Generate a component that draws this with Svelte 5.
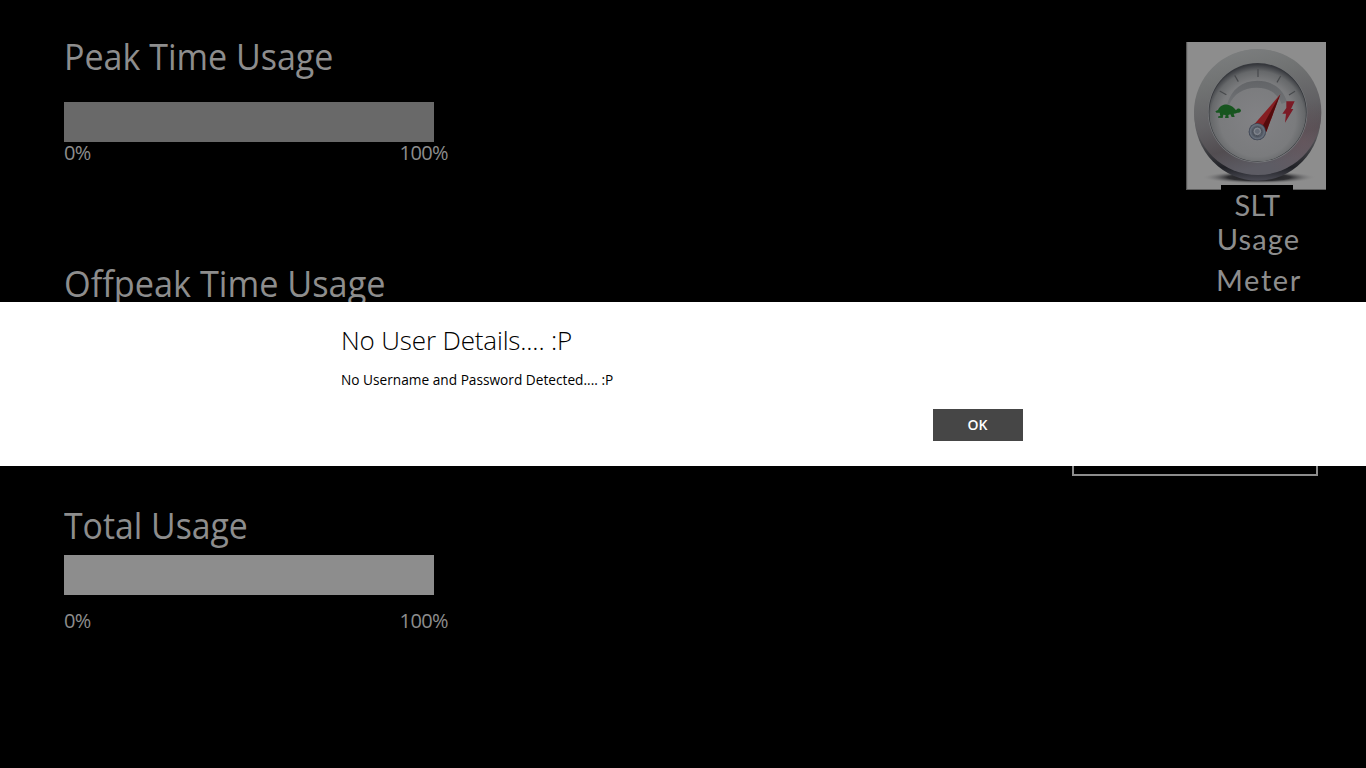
<script lang="ts">
   type Meter = {
      id: string;
      title: string;
      value: number;
      hasScale: boolean;
   };

   const meters: Meter[] = [
      { id: "peak", title: "Peak Time Usage", value: 0, hasScale: true },
      { id: "offpeak", title: "Offpeak Time Usage", value: 0, hasScale: false },
      { id: "total", title: "Total Usage", value: 0, hasScale: true },
   ];

   const ticks: string[] = ["M131 177L151 188", "M176 130L187 149", "M246 111V135", "M314 132L303 151", "M357 178L339 189"];

   let dialogOpen: boolean = true;

   const closeDialog = (): void => {
      dialogOpen = false;
   };
</script>

<div class="page">
   <main class="meters">
      {#each meters as meter (meter.id)}
         <section class="meter {meter.id}">
            <h1>{meter.title}</h1>
            <div class="bar">
               <div class="fill" style="width: {meter.value}%"></div>
            </div>
            {#if meter.hasScale}
               <div class="scale">
                  <span>0%</span>
                  <span>100%</span>
               </div>
            {/if}
         </section>
      {/each}
   </main>

   <aside>
      <div class="logo">
         <svg viewBox="30 30 420 444" width="140" height="148" preserveAspectRatio="none" aria-hidden="true">
            <defs>
               <linearGradient id="rim" x1="0" y1="0" x2="0.25" y2="1">
                  <stop offset="0" stop-color="#7f8182" />
                  <stop offset="0.3" stop-color="#717373" />
                  <stop offset="0.6" stop-color="#626164" />
                  <stop offset="0.82" stop-color="#524d51" />
                  <stop offset="1" stop-color="#5d5c64" />
               </linearGradient>
               <linearGradient id="edge" x1="0" y1="0" x2="0" y2="1">
                  <stop offset="0" stop-color="#777a7b" />
                  <stop offset="0.65" stop-color="#5a5a5d" />
                  <stop offset="0.9" stop-color="#202126" />
                  <stop offset="1" stop-color="#4b4b54" />
               </linearGradient>
               <radialGradient id="face" cx="0.5" cy="0.56" r="0.56">
                  <stop offset="0" stop-color="#828285" />
                  <stop offset="0.7" stop-color="#7a7b7d" />
                  <stop offset="0.87" stop-color="#66686a" />
                  <stop offset="1" stop-color="#34363b" />
               </radialGradient>
               <radialGradient id="shade">
                  <stop offset="0" stop-color="#17171a" />
                  <stop offset="0.55" stop-color="#303033" />
                  <stop offset="1" stop-color="#8c8c8c" stop-opacity="0" />
               </radialGradient>
               <radialGradient id="blush" cx="0.86" cy="0.74" r="0.32">
                  <stop offset="0" stop-color="#6a585f" stop-opacity="0.7" />
                  <stop offset="1" stop-color="#6a585f" stop-opacity="0" />
               </radialGradient>
               <linearGradient id="arc" x1="0" y1="0" x2="0" y2="1">
                  <stop offset="0" stop-color="#626467" />
                  <stop offset="1" stop-color="#707275" />
               </linearGradient>
               <radialGradient id="hub">
                  <stop offset="0" stop-color="#777b82" />
                  <stop offset="0.42" stop-color="#838890" />
                  <stop offset="0.55" stop-color="#4d535e" />
                  <stop offset="0.82" stop-color="#68707c" />
                  <stop offset="1" stop-color="#303746" />
               </radialGradient>
            </defs>
            <rect x="31" y="30" width="420" height="444" fill="#8d8d8d" />
            <path d="M32 30V473H451" fill="none" stroke="#555" stroke-width="3" />
            <ellipse cx="249" cy="436" rx="171" ry="19" fill="url(#shade)" />
            <ellipse cx="245" cy="249" rx="190" ry="197" fill="url(#edge)" />
            <ellipse cx="245" cy="240" rx="191" ry="189" fill="url(#rim)" />
            <ellipse cx="245" cy="240" rx="191" ry="189" fill="url(#blush)" />
            <ellipse cx="245" cy="242" rx="149" ry="150" fill="#77797c" />
            <ellipse cx="245" cy="241" rx="147" ry="148" fill="#36383c" />
            <ellipse cx="245" cy="242" rx="145" ry="146" fill="url(#face)" />
            <path d="M153 218C166 171 199 146 244 146C289 146 321 171 333 209L317 216C304 184 279 167 242 167C200 167 173 187 160 218Z" fill="url(#arc)" />
            {#each ticks as tick}
               <path d={tick} stroke="#47494c" stroke-width="3.5" />
            {/each}
            <path
               d="M118 238L126 234C132 221 142 217 155 218C166 219 175 227 180 235C184 227 191 228 195 234C195 240 191 243 185 242C180 244 176 245 173 245L176 255L167 255L163 247L157 249L158 258L147 258L149 249L142 248L140 258L126 257L127 253L133 252L131 242L121 242Z"
               fill="#17551f"
            />
            <path d="M331 208H356L345 231H352L327 272L330 245H319L331 228Z" fill="#7b1a25" />
            <path d="M313 187L233 279L271 299Z" fill="#861e22" />
            <path d="M313 187L255 290L271 299Z" fill="#540b0c" />
            <circle cx="244" cy="299" r="26" fill="url(#hub)" />
            <circle cx="244" cy="298" r="13" fill="#747980" stroke="#4a505b" stroke-width="3" />
            <circle cx="244" cy="298" r="9" fill="#656b76" stroke="#858991" stroke-width="3" />
            <rect x="135" y="459" width="216" height="16" fill="#000" />
         </svg>
         <div class="name">
            <span class="slt">SLT</span>
            <span class="usage">Usage</span>
            <span class="meter-word">Meter</span>
         </div>
      </div>
      <div class="account"></div>
   </aside>

   {#if dialogOpen}
      <div class="dialog" role="alertdialog" aria-labelledby="dialog-title">
         <div class="content">
            <h2 id="dialog-title">No User Details.... :P</h2>
            <p>No Username and Password Detected.... :P</p>
            <button type="button" on:click={closeDialog}>OK</button>
         </div>
      </div>
   {/if}
</div>

<style>
   :global(body) {
      margin: 0;
      background: #000;
   }

   .page {
      position: relative;
      display: flex;
      justify-content: space-between;
      box-sizing: border-box;
      width: 1366px;
      height: 768px;
      overflow: hidden;
      background: #000;
      color: #8d8d8d;
      font-family: "Open Sans", "Noto Sans", sans-serif;
   }

   h1,
   h2,
   p {
      margin: 0;
      white-space: nowrap;
   }

   .meters {
      display: flex;
      flex-direction: column;
      width: 385px;
      padding: 33px 0 0 64px;
   }

   .meter {
      height: 227px;
   }

   .offpeak {
      height: 242px;
   }

   h1 {
      height: 48px;
      font-size: 36px;
      font-weight: 400;
      line-height: 48px;
      transform: scaleX(0.945);
      transform-origin: left;
   }

   .offpeak h1 {
      transform: scaleX(0.952);
   }

   .total h1 {
      transform: scaleX(0.938);
   }

   .bar {
      width: 370px;
      height: 40px;
      margin-top: 21px;
      background: #696969;
   }

   .total .bar {
      margin-top: 5px;
      background: #8d8d8d;
   }

   .fill {
      height: 100%;
      background: #464646;
   }

   .scale {
      display: flex;
      justify-content: space-between;
      width: 384px;
      font-size: 20px;
      letter-spacing: -0.6px;
      line-height: 22px;
   }

   .total .scale {
      margin-top: 15px;
   }

   aside {
      display: flex;
      flex-direction: column;
      align-items: flex-end;
      padding: 42px 40px 0 0;
   }

   .logo {
      display: flex;
      flex-direction: column;
      align-items: center;
      width: 140px;
   }

   svg {
      display: block;
   }

   .name {
      display: flex;
      flex-direction: column;
      align-items: center;
      padding-left: 5px;
      font-family: Lato, sans-serif;
      font-size: 29px;
      line-height: 34px;
   }

   .slt {
      margin: -2px 2px 0 0;
      letter-spacing: 0.4px;
   }

   .usage {
      letter-spacing: 1.1px;
   }

   .meter-word {
      margin-top: 7px;
      padding-left: 1px;
      letter-spacing: 1.6px;
   }

   .account {
      box-sizing: border-box;
      width: 246px;
      height: 50px;
      margin: 129px 8px 0 0;
      border: 2px solid #8d8d8d;
   }

   .dialog {
      position: absolute;
      top: 302px;
      left: 0;
      width: 100%;
      height: 164px;
      background: #fff;
      color: #000;
   }

   .content {
      display: flex;
      flex-direction: column;
      width: 682px;
      margin-left: 341px;
      padding-top: 20px;
   }

   h2 {
      font-size: 26px;
      font-weight: 350;
      letter-spacing: -0.16px;
      line-height: 36px;
   }

   p {
      margin-top: 12px;
      font-size: 14px;
      line-height: 20px;
      transform: scaleX(0.977);
      transform-origin: left;
   }

   button {
      align-self: flex-end;
      width: 90px;
      height: 32px;
      margin-top: 19px;
      padding: 0 1px 0 0;
      border: 0;
      background: #464646;
      color: #fff;
      font-family: inherit;
      font-size: 14px;
      font-weight: 600;
      line-height: 32px;
   }
</style>
